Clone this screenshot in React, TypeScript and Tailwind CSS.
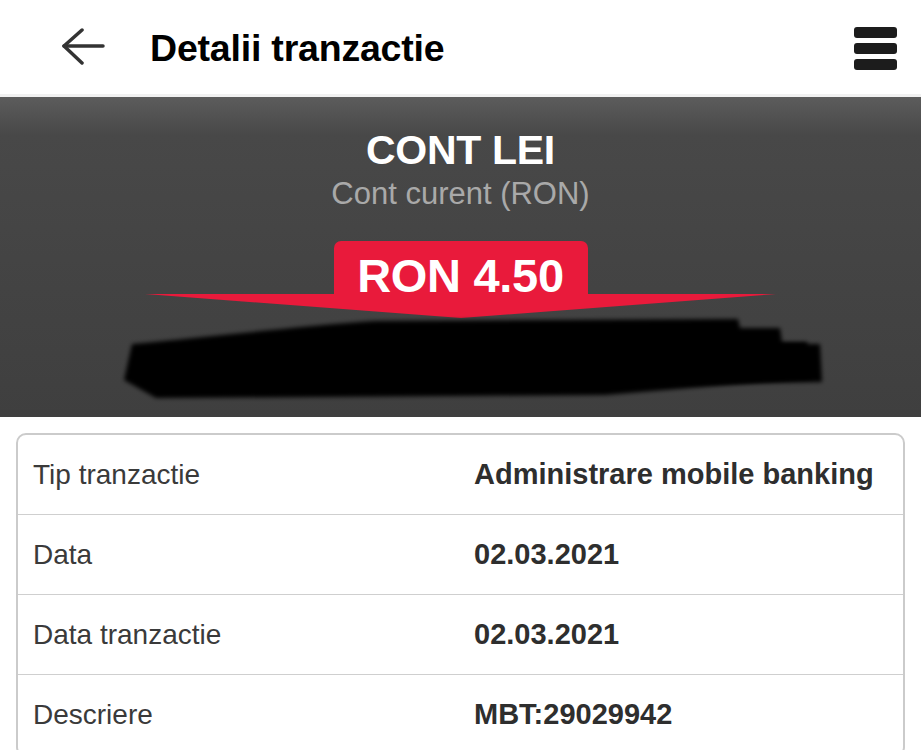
import React from 'react';

const rows = [
    { label: 'Tip tranzactie', value: 'Administrare mobile banking' },
    { label: 'Data', value: '02.03.2021' },
    { label: 'Data tranzactie', value: '02.03.2021' },
    { label: 'Descriere', value: 'MBT:29029942' },
];

const BackArrow = () => (
    <svg width="46" height="40" viewBox="0 0 46 40" fill="none">
        <path d="M3 18 L42 18" stroke="#333" strokeWidth="3.5" strokeLinecap="round" />
        <path d="M21 2 L3 18 L21 35" stroke="#333" strokeWidth="3.5" strokeLinecap="round" strokeLinejoin="round" />
    </svg>
);

const App: React.FC = () => {
    return (
        <div className="w-[921px] h-[750px] overflow-hidden bg-white" style={{ fontFamily: '"Liberation Sans", Arial, sans-serif' }}>
            {/* Header */}
            <div className="h-[97px] flex items-center justify-between border-b-[3px] border-[#f1f1f1]">
                <div className="flex items-center pl-[61px] pt-[2px]">
                    <BackArrow />
                    <h1 className="ml-[43px] text-[37.5px] font-bold text-black tracking-[-0.2px]">Detalii tranzactie</h1>
                </div>
                <div className="flex flex-col gap-[5px] pr-[24px] pt-[3px]">
                    <span className="block w-[43px] h-[11px] rounded-[3px] bg-[#1c1c1c]" />
                    <span className="block w-[43px] h-[11px] rounded-[3px] bg-[#1c1c1c]" />
                    <span className="block w-[43px] h-[11px] rounded-[3px] bg-[#1c1c1c]" />
                </div>
            </div>

            {/* Account band */}
            <div className="h-[320px] flex flex-col items-center bg-[linear-gradient(to_bottom,#5c5c5c_0%,#484848_12%,#434343_60%,#3f3f3f_100%)]">
                <div className="mt-[30px] h-[46px] leading-[46px] text-[41px] font-bold text-white tracking-[-0.3px]">CONT LEI</div>
                <div className="mt-[3px] h-[36px] leading-[36px] text-[31px] text-[#a9a9a9]">Cont curent (RON)</div>
                <div className="mt-[29px] w-[254px] h-[53px] rounded-t-[7px] bg-[#e91a3b] flex items-end justify-center">
                    <span className="text-[47px] leading-[47px] font-bold text-white -mb-[5px] tracking-[-0.3px]">RON 4.50</span>
                </div>
                <svg width="921" height="112" viewBox="0 0 921 112" className="block">
                    <defs>
                        <filter id="smudge" x="-5%" y="-20%" width="110%" height="140%">
                            <feGaussianBlur stdDeviation="2.2" />
                        </filter>
                    </defs>
                    <path d="M145 0 L776 0 L461 24 Z" fill="#e91a3b" />
                    <path
                        d="M132 50 C 200 44, 300 32, 375 27 L 738 25 L 740 34 L 780 34 L 782 48 L 807 48 L 811 84 L 762 88 L 605 101 L 156 104 L 124 86 Z"
                        fill="#000"
                        filter="url(#smudge)"
                    />
                    <path d="M165 52 L 820 50 L 822 88 L 170 98 Z" fill="#000" filter="url(#smudge)" />
                </svg>
            </div>

            {/* Details card */}
            <div className="px-[16px] pt-[16px]">
                <div className="border-2 border-[#cbcbcb] rounded-[10px] bg-white">
                    {rows.map((row, i) => (
                        <div key={row.label} className={`flex items-center h-[80px] ${i < rows.length - 1 ? 'border-b border-[#cfcfcf]' : ''}`}>
                            <div className="w-[456px] pl-[15px] text-[28px] text-[#3a3a3a]">{row.label}</div>
                            <div className="text-[29px] font-bold text-[#2e2e2e]">{row.value}</div>
                        </div>
                    ))}
                </div>
            </div>
        </div>
    );
};

export default App;
